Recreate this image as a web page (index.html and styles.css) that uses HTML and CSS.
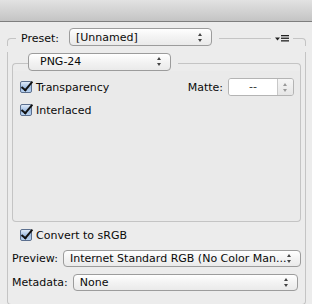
FILE: index.html
```html
<!DOCTYPE html>
<html>
<head>
<meta charset="utf-8">
<link rel="stylesheet" href="styles.css">
</head>
<body>
<div class="titlebar"></div>
<div class="panel">
  <div class="group-head">
    <span class="corner-l"></span>
    <span class="head-label">Preset:</span>
    <div class="select preset"><span class="val">[Unnamed]</span><span class="arrows"></span></div>
    <span class="line"></span>
    <span class="menu-icon">
      <svg width="14" height="8" viewBox="0 0 14 8"><path d="M0 2.5h5l-2.5 3z" fill="#222"/><rect x="6" y="0" width="8" height="1.3" fill="#222"/><rect x="6" y="2.6" width="8" height="1.3" fill="#222"/><rect x="6" y="5.2" width="8" height="1.3" fill="#222"/></svg>
    </span>
    <span class="line short"></span>
    <span class="corner-r"></span>
  </div>
  <div class="group-body">
    <div class="inner-head">
      <span class="corner-l small"></span>
      <div class="select format"><span class="val">PNG-24</span><span class="arrows"></span></div>
      <span class="line"></span>
      <span class="corner-r"></span>
    </div>
    <div class="inner-body">
      <div class="row">
        <label class="check"><span class="cb"></span>Transparency</label>
        <div class="matte">
          <span class="matte-label">Matte:</span>
          <div class="combo"><span class="combo-field">--</span><span class="combo-btn"><span class="arrows"></span></span></div>
        </div>
      </div>
      <label class="check second"><span class="cb"></span>Interlaced</label>
    </div>
    <label class="check srgb"><span class="cb"></span>Convert to sRGB</label>
    <div class="field-row preview">
      <span class="flabel">Preview:</span>
      <div class="select wide"><span class="val">Internet Standard RGB (No Color Man...</span><span class="arrows"></span></div>
    </div>
    <div class="field-row meta">
      <span class="flabel">Metadata:</span>
      <div class="select wide"><span class="val">None</span><span class="arrows"></span></div>
    </div>
  </div>
</div>
</body>
</html>
```
FILE: styles.css
```css
* { box-sizing: border-box; }
html, body { margin: 0; padding: 0; }
body {
  width: 312px;
  height: 304px;
  background: #ececec;
  font-family: "DejaVu Sans", sans-serif;
  font-size: 11px;
  color: #0a0a0a;
  overflow: hidden;
}
.titlebar {
  height: 22px;
  background: linear-gradient(#e2e2e2, #c4c4c4);
  border-bottom: 1px solid #7e7e7e;
}
.panel {
  padding: 6px 6px 0 7px;
}
.group-head, .inner-head {
  display: flex;
  align-items: flex-end;
}
.group-head { height: 18px; }
.corner-l {
  width: 9px;
  height: 8px;
  border-top: 1px solid #c4c4c4;
  border-left: 1px solid #c4c4c4;
  border-top-left-radius: 4px;
  flex: none;
}
.corner-l.small { width: 16px; }
.corner-r {
  width: 5px;
  height: 8px;
  border-top: 1px solid #c4c4c4;
  border-right: 1px solid #c4c4c4;
  border-top-right-radius: 4px;
  flex: none;
}
.line {
  flex: 1;
  height: 8px;
  border-top: 1px solid #c4c4c4;
  margin-left: 7px;
}
.line.short { flex: none; width: 8px; margin-left: 4px; }
.head-label {
  margin: 0 10px 0 5px;
  align-self: center;
  padding-top: 2px;
}
.menu-icon {
  align-self: center;
  margin-left: 4px;
  padding-top: 4px;
  display: flex;
}
.select {
  height: 18px;
  border: 1px solid #9c9c9c;
  border-radius: 4px;
  background: linear-gradient(#ffffff, #f3f3f3 50%, #eaeaea);
  display: flex;
  align-items: center;
  padding: 0 8px 0 6px;
  flex: none;
  align-self: center;
}
.select .val {
  flex: 1;
  white-space: nowrap;
  overflow: hidden;
}
.arrows {
  width: 5px;
  height: 9px;
  position: relative;
  flex: none;
}
.arrows::before, .arrows::after {
  content: "";
  position: absolute;
  left: 0;
  border-left: 2.5px solid transparent;
  border-right: 2.5px solid transparent;
}
.arrows::before { top: 0; border-bottom: 3px solid #444; }
.arrows::after { bottom: 0; border-top: 3px solid #444; }
.preset { width: 143px; }
.group-body {
  border: 1px solid #c4c4c4;
  border-top: none;
  border-radius: 0 0 4px 4px;
  height: 253px;
  padding: 0 4px 0 4px;
}
.inner-head { height: 19px; margin-top: 6px; }
.format { width: 143px; height: 18px; padding-left: 11px; }
.inner-body {
  border: 1px solid #c4c4c4;
  border-top: none;
  border-radius: 0 0 4px 4px;
  height: 151px;
  background: #eaeaea;
  padding: 7px 6px 0 7px;
}
.row {
  display: flex;
  align-items: center;
  justify-content: space-between;
  height: 18px;
}
.check {
  display: flex;
  align-items: center;
  gap: 4px;
  height: 14px;
}
.check.second { margin-top: 7px; }
.cb {
  width: 12px;
  height: 12px;
  border: 1px solid #5b6f8e;
  border-radius: 2px;
  background: linear-gradient(#dfeaf8, #9fbde3 55%, #b9d2f0);
  position: relative;
  flex: none;
}
.cb::after {
  content: "";
  position: absolute;
  left: 3px;
  top: -3px;
  width: 4px;
  height: 10px;
  border-right: 2.5px solid #111;
  border-bottom: 2.5px solid #111;
  transform: rotate(40deg);
}
.matte {
  display: flex;
  align-items: center;
}
.matte-label { margin-right: 5px; }
.combo {
  display: flex;
  height: 18px;
  width: 66px;
  border: 1px solid #b4b4b4;
  border-radius: 3px;
  overflow: hidden;
}
.combo-field {
  flex: 1;
  background: #fff;
  text-align: center;
  line-height: 16px;
  color: #333;
}
.combo-btn {
  width: 16px;
  border-left: 1px solid #c8c8c8;
  background: linear-gradient(#f6f6f6, #e6e6e6);
  display: flex;
  align-items: center;
  justify-content: center;
}
.combo-btn .arrows::before { border-bottom-color: #999; }
.combo-btn .arrows::after { border-top-color: #999; }
.srgb { margin: 6px 0 0 8px; }
.field-row {
  display: flex;
  align-items: center;
  margin-right: 3px;
}
.field-row.preview { margin-top: 8px; }
.field-row.meta { margin-top: 7px; }
.flabel { margin-right: 5px; }
.wide { flex: 1; height: 17px; }
```
